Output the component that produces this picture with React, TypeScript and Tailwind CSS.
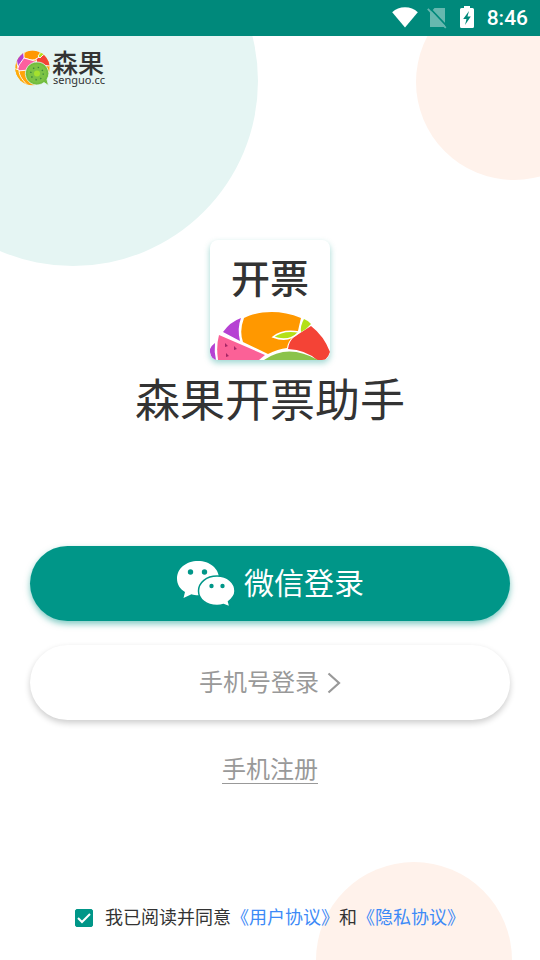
import React, { useState } from "react";

function StatusBar() {
  return (
    <header className="relative flex h-9 items-center justify-end bg-[#00897b] pr-3 text-white">
      <svg className="mr-2 h-6 w-7" viewBox="0 0 28 24" fill="currentColor" role="img" aria-label="Wi-Fi">
        <path d="M14 21.500 1.200 6.200C4.600 3 9 1.300 14 1.300S23.400 3 26.800 6.200Z" />
      </svg>
      <svg className="mr-3 h-6 w-5" viewBox="0 0 20 24" role="img" aria-label="无信号">
        <g opacity="0.4">
          <path d="M7.500 2H18v19H3V7Z" fill="#fff" />
        </g>
        <path d="m2.300 1.600 18 19" stroke="#00897b" strokeWidth="1.600" />
        <path d="m.8 2.800 18 19" stroke="#66b8b0" strokeWidth="1.800" />
      </svg>
      <svg className="mr-3 h-6 w-4" viewBox="0 0 16 24" role="img" aria-label="充电中">
        <path d="M1 3.500Q1 2 2.500 2H5V0h6v2h2.500Q15 2 15 3.500V20.500q0 1.500-1.500 1.500h-11Q1 22 1 20.500Z" fill="#fff" />
        <path d="M10 5 4.200 13h3.300L6 19l5.800-8.500H8.500Z" fill="#00897b" />
      </svg>
      <time className="font-[Roboto,sans-serif] text-[21px] leading-6 font-medium">8:46</time>
    </header>
  );
}

function Brand() {
  return (
    <div className="flex items-center gap-0.5 px-3.5 pt-3.5 text-[#333]">
      <svg className="h-9 w-9" viewBox="0 0 36 36" aria-hidden="true">
        <clipPath id="brand-disc">
          <circle cx="18.500" cy="18" r="17.200" />
        </clipPath>
        <g clipPath="url(#brand-disc)" stroke="#fff" strokeWidth="0.900">
          <path d="M0 0h36v36H0Z" fill="#ffa40a" />
          <path d="M2 8 9 0l2 9-7 9Z" fill="#b43fd0" />
          <path d="M10 3C15-1 22-1 27 3c-1 5-5 7-10 7L10 8Z" fill="#ff9800" />
          <path d="m5 15 5-7 14 4-9 8-12 1Z" fill="#fc5f9f" />
          <path d="M22 9q6-4 9-5l6 8-2 4-12-2Z" fill="#f44336" />
          <path d="m24 6 3-4 3 2-4 4Z" fill="#b4df1e" />
          <path d="m-1 18 6 2c0 7 5 11 9 16H4Z" fill="#ffac0a" />
        </g>
        <path d="M23 12a11.500 11.500 0 1 0 7 20.500l4.500 3-1.500-6A11.500 11.500 0 0 0 23 12Z" fill="#72bd3d" stroke="#e5f5f3" strokeWidth="0.800" />
        <circle cx="23" cy="23.500" r="9.500" fill="#7cc344" />
        <circle cx="23" cy="23.500" r="6.200" fill="none" stroke="#39883b" strokeWidth="1.400" strokeDasharray="1.300 3.570" />
        <circle cx="23" cy="23.500" r="3" fill="#a4e02e" />
      </svg>
      <div>
        <p className="text-[26px] leading-6 font-medium">森果</p>
        <p className="pl-px font-['Noto_Sans',sans-serif] text-[11px] leading-3">senguo.cc</p>
      </div>
    </div>
  );
}

function AppIcon() {
  return (
    <div className="flex size-30 flex-col justify-between overflow-hidden rounded-lg bg-white shadow-[0_3px_6px_rgba(0,150,136,0.38)]">
      <p className="pt-3.5 text-center text-[39px] leading-11 font-medium text-[#333]">开票</p>
      <svg className="h-13 w-full" viewBox="0 0 120 52" aria-hidden="true">
        <path d="M13 24Q20 14 31 10q-4 10-1 23Z" fill="#b642d3" />
        <path d="M34 10C48 3 70 1 91 10q-2 8-3 13-1 2-4 5-6 5-7 12-9 1-19 6L33 34q-4-11 1-24Z" fill="#ff9800" />
        <path d="M0 41q2-4 5-6-1 9 1 17H3q-2-3-3-7Z" fill="#b642d3" />
        <path d="m9 27 46 20-6 5H8Q6 38 9 27Z" fill="#fb6197" />
        <path d="M78 41q1-8 6-12l17-11q13 10 19 26-1 4-5 8h-8Q96 42 78 41Z" fill="#f44336" />
        <path d="M63 29q10-8 26-5-10 11-26 5Z" fill="#b3e017" stroke="#fff" strokeWidth="1.500" />
        <path d="M94 11q5 2 7 5l-5 5-5 3q-1-6 3-13Z" fill="#b3e017" />
        <path d="M54 52q24-17 54 0Z" fill="#8bc34a" />
        <g fill="#a52665">
          <path d="m15 35 3 3-3 1ZM24 38l3 3-3 1ZM16 45l3 3-3 1Z" />
        </g>
      </svg>
    </div>
  );
}

function WeChatMark() {
  return (
    <svg className="h-12 w-15" viewBox="0 0 60 48" aria-hidden="true">
      <path d="M22 1C10 1 1 8.500 1 18.500c0 6 3 10.500 8 13.500l-1.500 6 8-3.700c2 .7 4.500 1 6.500 1 12 0 21-7.500 21-17S34 1 22 1Z" fill="#fff" />
      <path d="M41 16c-10.500 0-18.500 6.500-18.500 15S30.500 45.500 41 45.500c2.500 0 4.500-.3 6.500-1l6.500 2.500-1.500-5.500c4-3 6.500-6.500 6.500-10.500 0-8.500-7.500-15-18-15Z" fill="#fff" stroke="#009688" strokeWidth="1.500" />
      <g fill="#009688">
        <circle cx="14.500" cy="12" r="2.700" />
        <circle cx="28.500" cy="12" r="2.700" />
        <circle cx="35.500" cy="26" r="2.200" />
        <circle cx="46.500" cy="26" r="2.200" />
      </g>
    </svg>
  );
}

export default function App() {
  const [agreed, setAgreed] = useState(true);

  return (
    <div lang="zh-CN" className="relative flex min-h-screen flex-col overflow-hidden bg-white font-['Noto_Sans_CJK_SC',sans-serif] text-[#333]">
      <div className="pointer-events-none absolute inset-0" aria-hidden="true">
        <div className="absolute -top-26 -left-28 size-[370px] rounded-full bg-[#e5f5f3]" />
        <div className="absolute -top-4 -right-18 size-49 rounded-full bg-[#fff2eb]" />
        <div className="absolute right-7 -bottom-[98px] size-49 rounded-full bg-[#fff2eb]" />
      </div>

      <StatusBar />

      <main className="relative flex grow flex-col">
        <Brand />

        <section className="flex flex-col items-center pt-[154px]">
          <AppIcon />
          <h1 className="pt-3.5 text-[45px] leading-12">森果开票助手</h1>
        </section>

        <section className="flex flex-col items-center gap-6 px-7.5 pt-31">
          <button type="button" className="flex h-[75px] w-full items-center justify-center gap-2 rounded-full bg-[#009688] text-[30px] text-white shadow-[0_3px_6px_rgba(0,150,136,0.5)]">
            <WeChatMark />
            <span className="pb-1">微信登录</span>
          </button>
          <button type="button" className="flex h-[75px] w-full items-center justify-center gap-2 rounded-full bg-white text-2xl text-[#999] shadow-[0_3px_6px_rgba(0,0,0,0.2)]">
            <span className="pb-1">手机号登录</span>
            <svg className="h-6 w-3.5" viewBox="0 0 14 24" fill="none" stroke="currentColor" strokeWidth="2.200" aria-hidden="true">
              <path d="m1.500 2.500 10.500 9.500-10.500 9.500" />
            </svg>
          </button>
          <a href="#register" className="mt-2.5 border-b border-[#999] pb-px text-2xl leading-7 text-[#999]">
            手机注册
          </a>
        </section>

        <footer className="mt-auto flex items-center justify-center pb-7.5 text-lg leading-7">
          <label className="flex items-center gap-3">
            <span className="relative mt-1 size-[18px]">
              <input
                type="checkbox"
                checked={agreed}
                onChange={(event) => setAgreed(event.target.checked)}
                className="peer block size-full appearance-none rounded-xs border border-[#009688] bg-white checked:bg-[#009688]"
              />
              <svg className="pointer-events-none absolute inset-0 hidden size-full peer-checked:block" viewBox="0 0 18 18" fill="none" stroke="#fff" strokeWidth="2" aria-hidden="true">
                <path d="m3 9 4 4 8-8" />
              </svg>
            </span>
            我已阅读并同意
          </label>
          <a href="#terms" className="text-[#3d8af7]">《用户协议》</a>
          和
          <a href="#privacy" className="text-[#3d8af7]">《隐私协议》</a>
        </footer>
      </main>
    </div>
  );
}
